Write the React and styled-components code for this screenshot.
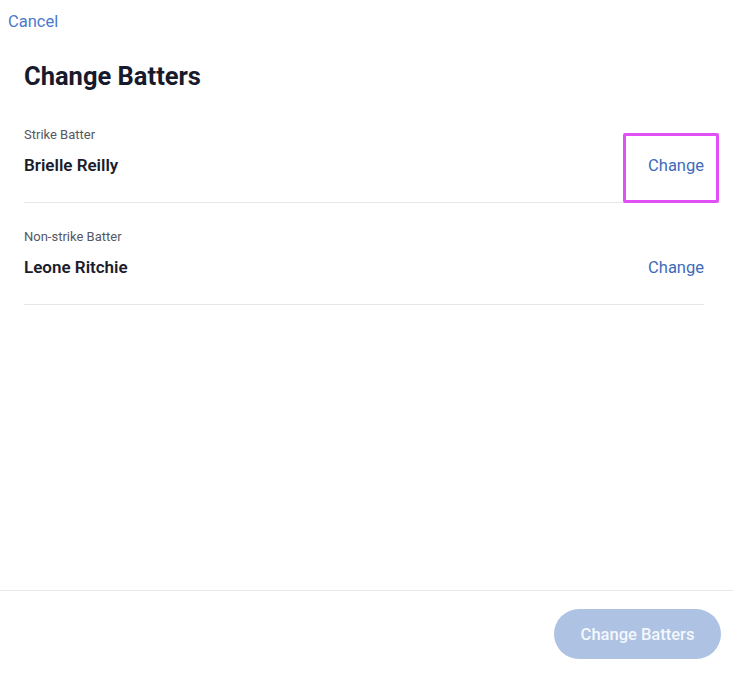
import { styled, createGlobalStyle } from 'styled-components'

const GlobalStyle = createGlobalStyle`
  html, body {
    margin: 0;
    padding: 0;
    background: #fff;
    font-family: Roboto, "Liberation Sans", sans-serif;
  }
`

const batters = [
  { role: 'Strike Batter', name: 'Brielle Reilly', highlight: true },
  { role: 'Non-strike Batter', name: 'Leone Ritchie' },
]

export default function App() {
  return (
    <>
      <GlobalStyle />
      <Modal>
        <Body>
          <CancelLink>Cancel</CancelLink>
          <Content>
            <Title>Change Batters</Title>
            {batters.map((b) => (
              <Row key={b.role}>
                <Info>
                  <Role>{b.role}</Role>
                  <Name>{b.name}</Name>
                </Info>
                <ChangeLink>Change</ChangeLink>
                {b.highlight && <Highlight />}
              </Row>
            ))}
          </Content>
        </Body>
        <Footer>
          <SubmitButton disabled>Change Batters</SubmitButton>
        </Footer>
      </Modal>
    </>
  )
}

const Modal = styled.div`
  width: 733px;
  height: 679px;
  display: flex;
  flex-direction: column;
`

const Body = styled.div`
  flex: 1;
  padding: 12px 0 0 8px;
`

const CancelLink = styled.a`
  display: block;
  font-size: 16.5px;
  line-height: 20px;
  color: #4c79cc;
  cursor: pointer;
`

const Content = styled.div`
  width: 680px;
  margin: 29px 0 0 16px;
`

const Title = styled.h1`
  margin: 0 0 23px;
  font-size: 25.5px;
  line-height: 30px;
  font-weight: 700;
  color: #171a2c;
`

const Row = styled.div`
  position: relative;
  display: flex;
  align-items: flex-end;
  justify-content: space-between;
  padding: 13px 0 26px;
  border-bottom: 1px solid #e6e6e8;
  & + & {
    padding-top: 26px;
  }
`

const Info = styled.div`
  display: flex;
  flex-direction: column;
  gap: 12px;
`

const Role = styled.span`
  font-size: 13px;
  line-height: 16px;
  color: #555862;
`

const Name = styled.span`
  font-size: 17px;
  line-height: 21px;
  font-weight: 600;
  color: #1b1d2b;
`

const ChangeLink = styled.a`
  font-size: 16.5px;
  line-height: 21px;
  color: #3f6abb;
  cursor: pointer;
`

const Highlight = styled.div`
  position: absolute;
  box-sizing: border-box;
  right: -15px;
  top: 19px;
  width: 96px;
  height: 70px;
  border: 3px solid #e150f5;
  border-radius: 2px;
  pointer-events: none;
`

const Footer = styled.div`
  display: flex;
  justify-content: flex-end;
  padding: 18px 12px 20px;
  border-top: 1px solid #e8e8ea;
`

const SubmitButton = styled.button`
  width: 167px;
  height: 50px;
  border: none;
  border-radius: 25px;
  background: #aec2e3;
  color: #f4f7fc;
  font-family: inherit;
  font-size: 16.5px;
  font-weight: 500;
`
